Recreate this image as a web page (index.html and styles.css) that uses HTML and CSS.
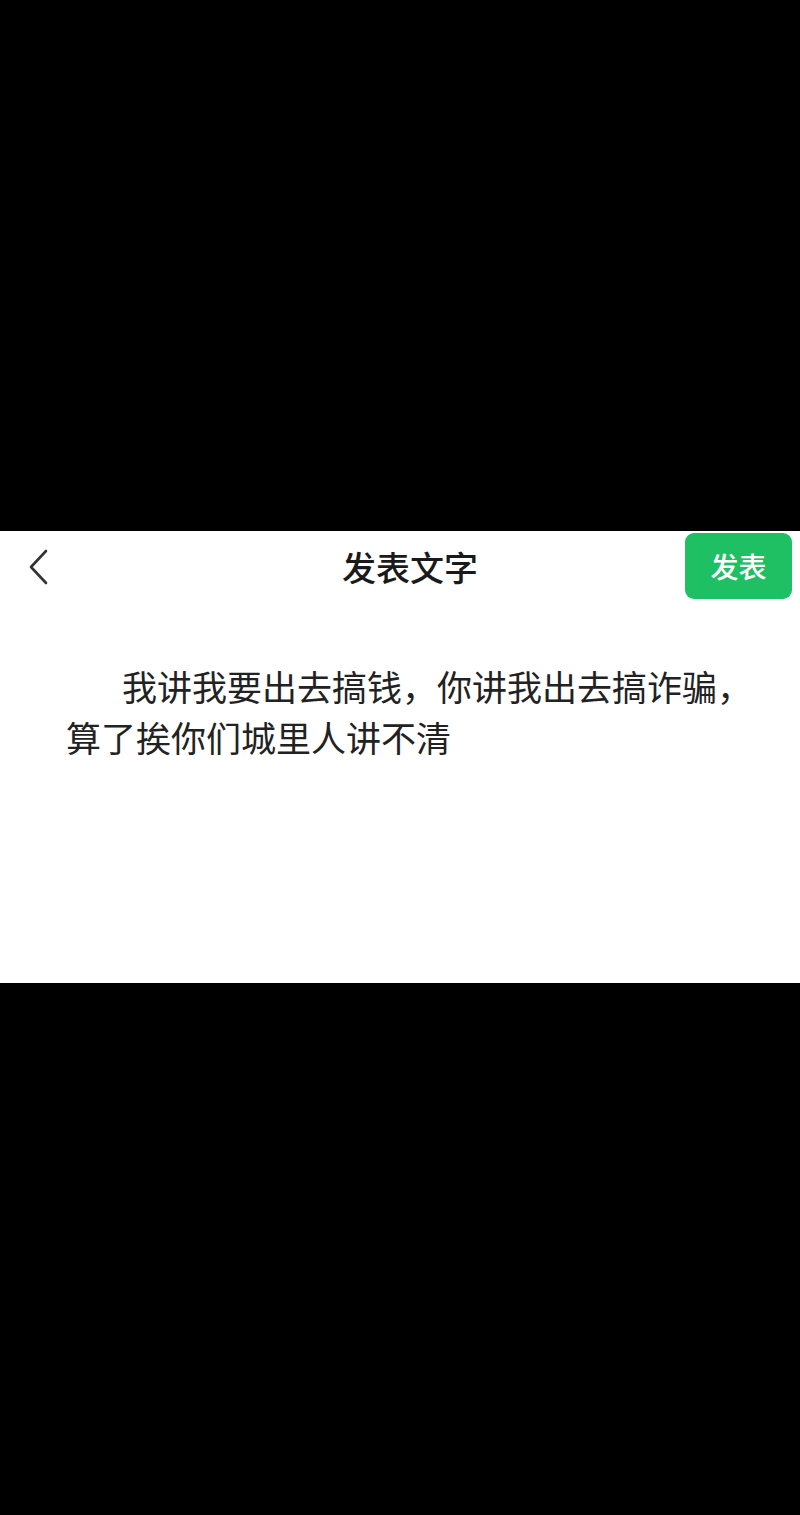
FILE: index.html
```html
<!DOCTYPE html>
<html lang="zh-CN">
<head>
<meta charset="utf-8">
<title>发表文字</title>
<link rel="stylesheet" href="styles.css">
</head>
<body>
<div class="screen">
  <div class="spacer-top"></div>
  <section class="panel">
    <header class="topbar">
      <div class="back">
        <svg class="back-icon" width="22" height="38" viewBox="0 0 22 38" aria-hidden="true">
          <polyline points="18,3 3,19 18,35" fill="none" stroke="#333" stroke-width="2.6" stroke-linecap="round" stroke-linejoin="round"/>
        </svg>
      </div>
      <h1 class="title">发表文字</h1>
      <div class="actions">
        <button class="publish">发表</button>
      </div>
    </header>
    <p class="content">我讲我要出去搞钱，你讲我出去搞诈骗，算了挨你们城里人讲不清</p>
  </section>
  <div class="spacer-bottom"></div>
</div>
</body>
</html>
```
FILE: styles.css
```css
html, body {
  margin: 0;
  padding: 0;
  background: #000;
}
body {
  font-family: "Noto Sans CJK SC", "Noto Sans", sans-serif;
}
.screen {
  width: 800px;
  height: 1515px;
  display: flex;
  flex-direction: column;
  background: #000;
}
.spacer-top {
  height: 531px;
  flex: none;
}
.panel {
  height: 452px;
  flex: none;
  background: #fff;
  display: flex;
  flex-direction: column;
}
.spacer-bottom {
  flex: 1;
}
.topbar {
  display: grid;
  grid-template-columns: 1fr auto 1fr;
  align-items: center;
  height: 71px;
  padding: 0 8px 0 28px;
}
.back {
  display: flex;
  align-items: center;
}
.back-icon {
  display: block;
}
.title {
  margin: 0;
  font-size: 34px;
  font-weight: 500;
  color: #1a1a1a;
  line-height: 40px;
}
.actions {
  display: flex;
  justify-content: flex-end;
  align-items: flex-start;
  align-self: start;
  padding-top: 2px;
}
.publish {
  width: 107px;
  height: 66px;
  border: 0;
  border-radius: 9px;
  background: #1fbf63;
  color: #fff;
  font-family: "Noto Sans CJK SC", "Noto Sans", sans-serif;
  font-size: 28px;
  font-weight: 500;
  padding: 0;
}
.content {
  margin: 58px 0 0 66px;
  width: 700px;
  font-size: 35px;
  line-height: 51px;
  text-indent: 56px;
  color: #222;
}
```
